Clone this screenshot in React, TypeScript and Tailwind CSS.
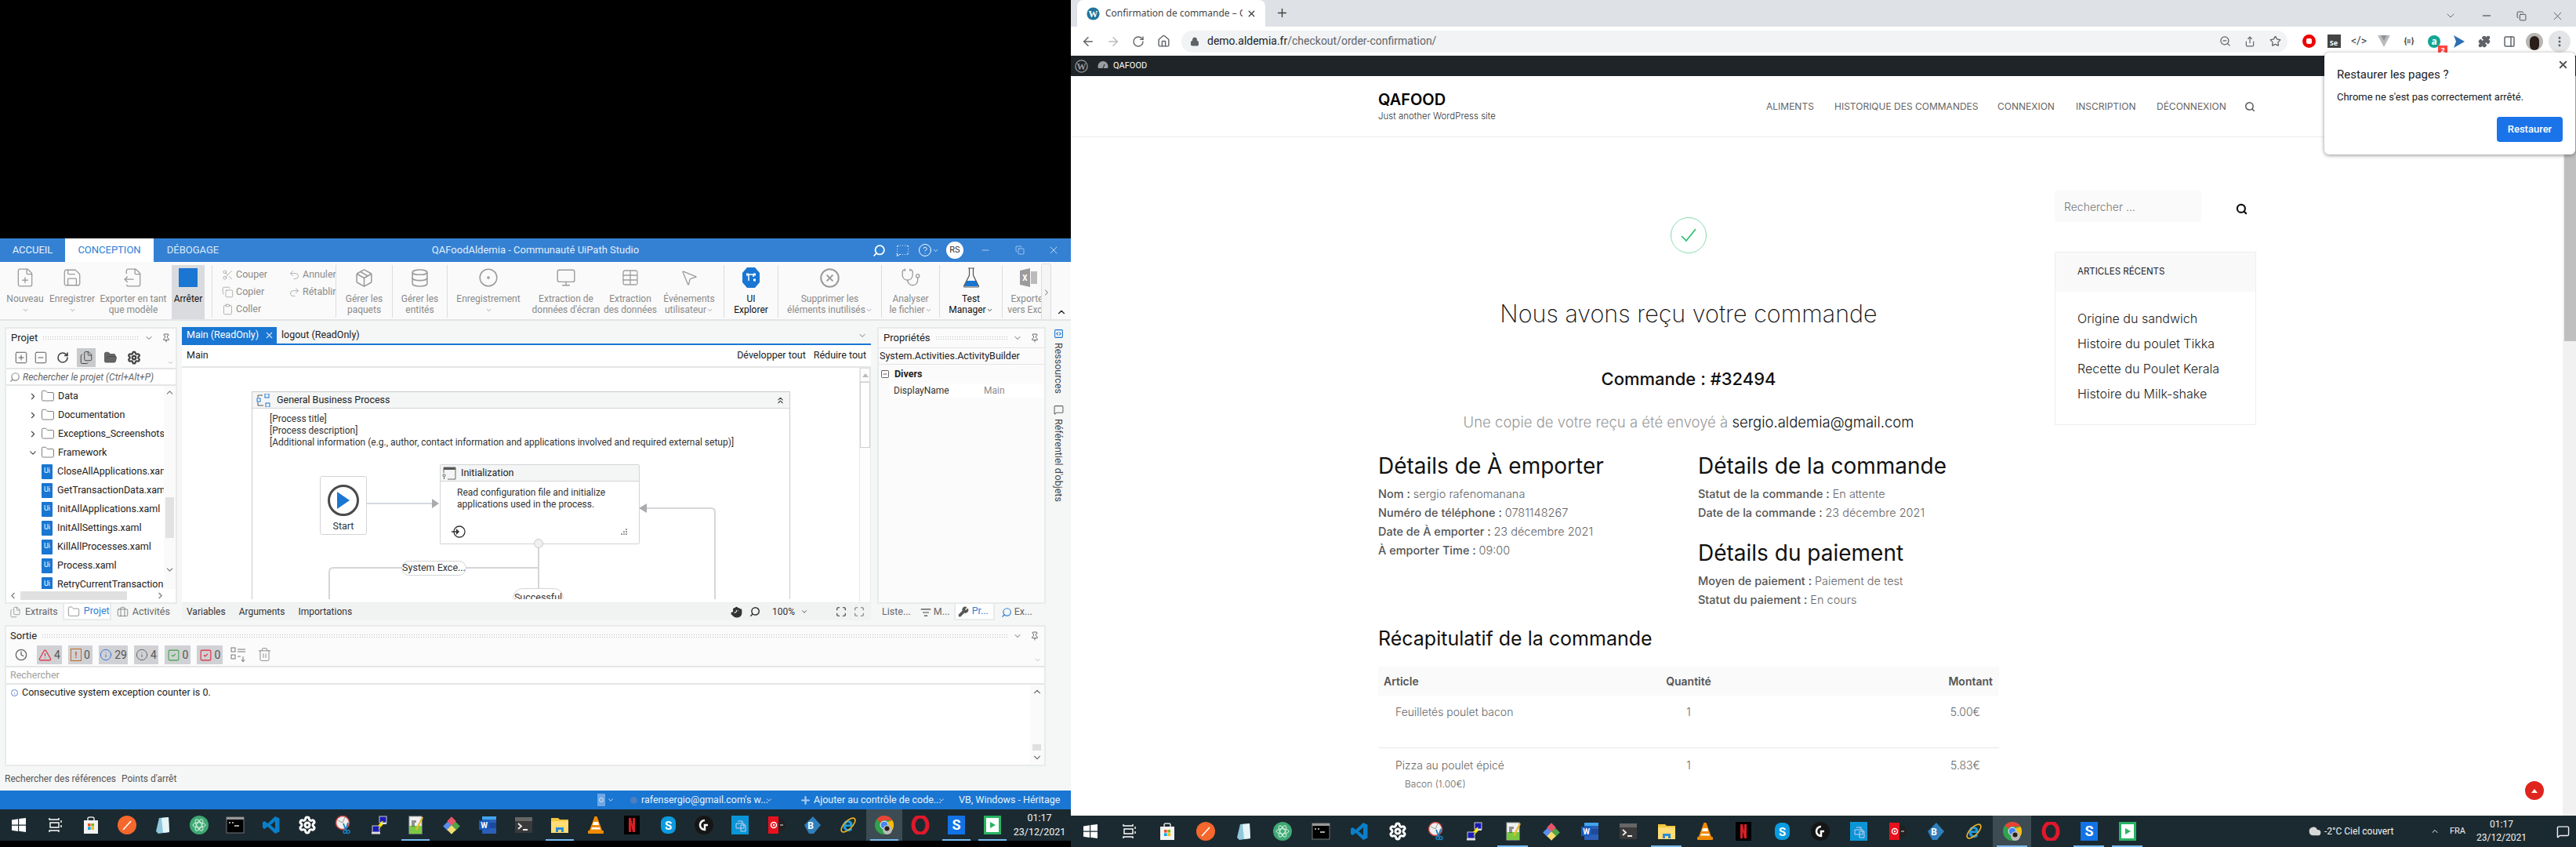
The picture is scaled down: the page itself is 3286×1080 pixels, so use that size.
import React from "react";
import {
  ArrowLeft, ArrowRight, ChevronDown, ChevronLeft, ChevronRight, ChevronUp, ChevronsUp, CircleDot, CircleHelp, CircleX, Clipboard,
  Clock, Cloud, Copy, Database, EllipsisVertical, FileOutput, FilePlus, Files, Folder, FolderOpen, Hand, Home, Lock, Maximize,
  MessageSquareDashed, Minus, Monitor, MousePointer2, Package, PanelRight, Pin, Plus, Puzzle, Redo2, RotateCw, Save, Scissors, Search,
  Settings, Share, SquareCheck, SquareMinus, SquarePlus, Star, Stethoscope, Table, Trash2, Undo2, X, ZoomOut, Wrench, Briefcase, TriangleAlert,
  Info, ListFilter, SquareCode, MessageSquare,
} from "lucide-react";

const ui = "font-['Roboto',sans-serif]";
const web = "font-['Inter',sans-serif]";

// ---- taskbar glyphs ----
const TaskIcon = ({ name, size }: { name: string; size: number }) => {
  const p = { width: size, height: size, viewBox: "0 0 24 24" };
  switch (name) {
    case "win":
      return <svg {...p}><path fill="#fff" d="M3 5.500l8-1.200V11.500H3zM12.200 4.100L21 3v8.500h-8.800zM3 12.700h8v7.200l-8-1.200zM12.200 12.700H21V21l-8.800-1.200z" /></svg>;
    case "tasks":
      return <svg {...p}><path fill="none" stroke="#fff" strokeWidth="1.400" d="M5 3v2h12V3M6 9h11v6H6zM5 21v-2h12v2M20 6v3M20 12v3" /></svg>;
    case "store":
      return <svg {...p}><path fill="none" stroke="#ddd" strokeWidth="1.500" d="M8 8V4q0-2 2-2h4q2 0 2 2v4" /><rect x="3" y="6" width="18" height="17" fill="#f3f3f3" /><rect x="8" y="10" width="3.600" height="3.600" fill="#f25022" /><rect x="12.400" y="10" width="3.600" height="3.600" fill="#7fba00" /><rect x="8" y="14.400" width="3.600" height="3.600" fill="#00a4ef" /><rect x="12.400" y="14.400" width="3.600" height="3.600" fill="#ffb900" /></svg>;
    case "postman":
      return <svg {...p}><circle cx="12" cy="12" r="12" fill="#f4672d" /><path stroke="#fff" strokeWidth="1.600" d="M7 18L17 7" /></svg>;
    case "notepad":
      return <svg {...p}><path fill="#8fc8dc" d="M7 3l12-1 1 19-14 2-3-3z" /><path fill="#e6f3f7" d="M10 3l9-1 1 19-8 1z" /></svg>;
    case "atom":
      return <svg {...p}><circle cx="12" cy="12" r="12" fill="#3fa874" /><g fill="none" stroke="#d8f5e4" strokeWidth="1"><ellipse cx="12" cy="12" rx="8" ry="3.200" /><ellipse cx="12" cy="12" rx="8" ry="3.200" transform="rotate(60 12 12)" /><ellipse cx="12" cy="12" rx="8" ry="3.200" transform="rotate(120 12 12)" /></g></svg>;
    case "cmd":
      return <svg {...p}><rect x="1" y="2" width="22" height="20" fill="#000" stroke="#777" /><rect x="1" y="2" width="22" height="3" fill="#999" /><path stroke="#ddd" strokeWidth="1.400" d="M4 9h2M8 9h2M11 13h6" /></svg>;
    case "vscode":
      return <svg {...p}><path fill="#0a7fc9" fillRule="evenodd" d="M17 1L7.500 10 3.500 7 1 8.500v7L3.500 17l4-3 9.500 9 5.500-2.500V3.500zM17 7v10l-6-5z" /></svg>;
    case "gear":
      return <Settings size={size} color="#fff" strokeWidth={3} />;
    case "snip":
      return <svg {...p}><circle cx="11" cy="9" r="8.500" fill="#eee" stroke="#c44" strokeWidth="1.500" /><path stroke="#999" d="M11 9l3-7M11 9l-6-3" /><path fill="none" stroke="#1a7fc0" strokeWidth="1.800" d="M12 10l3 8M18 9l-3 9" /><circle cx="14" cy="20.500" r="2" fill="none" stroke="#1a7fc0" strokeWidth="1.500" /><circle cx="18" cy="20.500" r="2" fill="none" stroke="#1a7fc0" strokeWidth="1.500" /></svg>;
    case "putty":
      return <svg {...p}><rect x="12" y="1" width="9" height="8" fill="#1a1ab8" stroke="#ccc" /><rect x="3" y="13" width="9" height="8" fill="#1a1ab8" stroke="#ccc" /><rect x="2" y="21" width="11" height="2.500" fill="#ddd" /><rect x="13" y="9" width="8" height="2" fill="#ddd" /><path fill="#ffe600" d="M15 7l-5 6 3 0-3 5 7-7-3 0 3-4z" /></svg>;
    case "npp":
      return <svg {...p}><rect x="4" y="1" width="16" height="22" fill="#f0f0f0" stroke="#aaa" /><rect x="4" y="13" width="16" height="10" fill="#7ac943" /><path stroke="#333" strokeWidth="1" d="M8 6v8M10 6v8M12 6v3" /><path stroke="#e8b92c" strokeWidth="2.200" d="M13 18L21 2" /></svg>;
    case "kraken":
      return <svg {...p}><rect x="3" y="9" width="9" height="9" transform="rotate(45 7.500 13.500)" fill="#5b8def" /><rect x="12" y="9" width="9" height="9" transform="rotate(45 16.500 13.500)" fill="#52a447" /><rect x="8" y="3" width="8" height="8" transform="rotate(45 12 7)" fill="#e8556a" /><rect x="8" y="14" width="8" height="8" transform="rotate(45 12 18)" fill="#f5dc6e" /></svg>;
    case "word":
      return <svg {...p}><rect x="5" y="1" width="18" height="22" fill="#2b5fb8" /><rect x="5" y="9" width="18" height="7" fill="#1d4a9c" /><rect x="5" y="1" width="18" height="4" fill="#41a5ee" /><rect x="1" y="6" width="13" height="12" fill="#185abd" /><text x="7.500" y="15.500" fontSize="10" fontWeight="700" fill="#fff" textAnchor="middle" fontFamily="Roboto">W</text></svg>;
    case "term":
      return <svg {...p}><rect x="1" y="2" width="22" height="20" rx="1" fill="#3a3a3a" /><rect x="1" y="2" width="22" height="5" fill="#666" /><path fill="none" stroke="#eee" strokeWidth="1.800" d="M5 10l4 3.500-4 3.500M11 18h6" /></svg>;
    case "files":
      return <svg {...p}><path fill="#f5c53d" d="M1 3h9l2 2h11v17H1z" /><rect x="1" y="7" width="22" height="15" fill="#ffdc74" /><path fill="#2a8bd8" d="M7 21v-6h10v6h-3v-3h-4v3z" /></svg>;
    case "vlc":
      return <svg {...p}><path fill="#f08a00" d="M10.500 1h3l7 19H3.500z" /><path fill="#fff" d="M9 8h6l1 4H8zM7 15h10l1 2.500H6z" /><rect x="2" y="19" width="20" height="4" rx="1" fill="#f08a00" /></svg>;
    case "netflix":
      return <svg {...p}><rect x="2" y="0" width="20" height="24" fill="#000" /><path fill="#d81f26" d="M8 3h3l2 9V3h3v18h-3l-2-9v9H8z" /></svg>;
    case "skype":
      return <svg {...p}><rect x="3" y="1" width="19" height="22" rx="8" fill="#0a9be0" /><text x="12.500" y="17.500" fontSize="15" fontWeight="700" fill="#fff" textAnchor="middle" fontFamily="Roboto">S</text></svg>;
    case "logi":
      return <svg {...p}><circle cx="12" cy="12" r="12" fill="#161616" /><path fill="none" stroke="#fff" strokeWidth="2.500" d="M13 6a6 6 0 1 0 0 12v-6h4" /></svg>;
    case "hp":
      return <svg {...p}><rect x="1" y="0" width="22" height="24" fill="#0a96d6" /><path fill="none" stroke="#cce" strokeWidth="1" d="M7 10h10v6H7zM9 7h6v3M13 12h6v8h-6z" /></svg>;
    case "rec":
      return <svg {...p}><circle cx="16" cy="12" r="8" fill="#222" /><rect x="2" y="1" width="13" height="22" fill="#e8101c" /><circle cx="9" cy="12" r="3.500" fill="none" stroke="#fff" strokeWidth="1.500" /><circle cx="9" cy="12" r="1.200" fill="#fff" /><path stroke="#aaa" strokeWidth="1.500" d="M17 12h4" /></svg>;
    case "blue":
      return <svg {...p}><path fill="#2f7fbd" d="M13 1l10 11-9 11H8L2 12z" /><text x="10" y="17" fontSize="12" fontWeight="700" fill="#fff" textAnchor="middle" fontFamily="Roboto">B</text></svg>;
    case "ie":
      return <svg {...p}><text x="11.500" y="20" fontSize="25" fontWeight="700" fill="#1e9be0" textAnchor="middle" fontFamily="Roboto">e</text><ellipse cx="12" cy="12" rx="11.500" ry="5" transform="rotate(-45 12 12)" fill="none" stroke="#f0b323" strokeWidth="1.600" /></svg>;
    case "chrome":
      return <svg {...p}><circle cx="12" cy="12" r="12" fill="#2fa24d" /><path fill="#ea4335" d="M12 0a12 12 0 0 1 10.400 6H12a6 6 0 0 0-5.400 3.400L2.800 4.300A12 12 0 0 1 12 0z" /><path fill="#fbbc04" d="M22.400 6A12 12 0 0 1 13 24l4-9a6 6 0 0 0-1-7z" /><circle cx="12" cy="12" r="5" fill="#4285f4" stroke="#fff" /><circle cx="16" cy="18" r="6" fill="#bbb" /><circle cx="15.500" cy="16.500" r="3" fill="#2a1e1a" /></svg>;
    case "opera":
      return <svg {...p}><ellipse cx="12" cy="12" rx="9" ry="11" fill="none" stroke="#e0182b" strokeWidth="5" /></svg>;
    case "snag":
      return <svg {...p}><rect x="1" y="0" width="22" height="24" fill="#1173e6" /><text x="12" y="18" fontSize="18" fontWeight="700" fill="#fff" textAnchor="middle" fontFamily="Roboto">S</text></svg>;
    default:
      return <svg {...p}><rect x="1" y="0" width="22" height="24" fill="#28b463" /><rect x="4" y="3" width="16" height="18" fill="#fff" /><path fill="#28b463" d="M9 8l7 4-7 4z" /></svg>;
  }
};

const taskNames = ["win", "tasks", "store", "postman", "notepad", "atom", "cmd", "vscode", "gear", "snip", "putty", "npp", "kraken", "word", "term", "files", "vlc", "netflix", "skype", "logi", "hp", "rec", "blue", "ie", "chrome", "opera", "snag", "play"];
const running = ["npp", "files", "chrome", "snag", "play"];

const Taskbar = ({ itemW, iconSize, height }: { itemW: string; iconSize: number; height: string }) => (
  <>
    {taskNames.map((n) => (
      <div key={n} className={`relative flex shrink-0 items-center justify-center ${itemW} ${height} ${n === "chrome" ? "bg-[#3d4b52]" : ""}`}>
        <TaskIcon name={n} size={iconSize} />
        {running.includes(n) && <div className="absolute bottom-0 left-[5px] right-[5px] h-[2px] bg-[#76b9ed]" />}
      </div>
    ))}
  </>
);

// ---- studio ribbon ----
const Sep = () => <div className="mt-[4px] h-[67px] w-px shrink-0 bg-[#dcdddf]" />;

const RibbonBtn = ({ w, icon, lines, dark, chevron, inline }: { w: string; icon: React.ReactNode; lines: string[]; dark?: boolean; chevron?: boolean; inline?: boolean }) => (
  <div className={`flex shrink-0 flex-col items-center pt-[8px] text-center leading-[14px] ${w} ${dark ? "text-[#111]" : "text-[#8a8a8a]"}`}>
    <div className="flex h-[24px] items-center justify-center">{icon}</div>
    <div className="mt-[8px] whitespace-nowrap">{lines[0]}</div>
    {lines[1] && (
      <div className="flex items-center whitespace-nowrap">
        {lines[1]}
        {inline && <ChevronDown size={9} />}
      </div>
    )}
    {chevron && <ChevronDown size={9} className="mt-[3px]" />}
  </div>
);

const SmallCmd = ({ icon, label }: { icon: React.ReactNode; label: string }) => (
  <div className="flex h-[22px] items-center gap-[3px] text-[#8a8a8a]">
    <span className="flex w-[16px] justify-center">{icon}</span>
    {label}
  </div>
);

const ic = "#9b9b9b";

const Ribbon = () => (
  <div className={`flex h-[75px] shrink-0 overflow-hidden border-b-2 border-[#e4e5e6] bg-[#fafafa] pl-[2px] text-[12px] ${ui}`}>
    <RibbonBtn w="w-[60px]" icon={<FilePlus size={26} color={ic} strokeWidth={1.2} />} lines={["Nouveau", ""]} chevron />
    <RibbonBtn w="w-[60px]" icon={<Save size={26} color={ic} strokeWidth={1.2} />} lines={["Enregistrer", ""]} chevron />
    <RibbonBtn w="w-[96px]" icon={<FileOutput size={26} color={ic} strokeWidth={1.2} />} lines={["Exporter en tant", "que modèle"]} />
    <div className="ml-px mt-[4px] flex h-[71px] w-[42px] shrink-0 flex-col items-center bg-[#dadbde] pt-[4px] text-[#111]">
      <div className="h-[24px] w-[24px] bg-[#1976d2]" />
      <div className="mt-[8px] leading-[14px]">Arrêter</div>
    </div>
    <div className="w-[9px] shrink-0" />
    <Sep />
    <div className="grid w-[157px] shrink-0 grid-cols-[85px_1fr] content-start pl-[11px] pt-[5px] text-[12.500px]">
      <SmallCmd icon={<Scissors size={15} color={ic} strokeWidth={1.2} />} label="Couper" />
      <SmallCmd icon={<Undo2 size={15} color={ic} strokeWidth={1.2} />} label="Annuler" />
      <SmallCmd icon={<Copy size={15} color={ic} strokeWidth={1.2} />} label="Copier" />
      <SmallCmd icon={<Redo2 size={15} color={ic} strokeWidth={1.2} />} label="Rétablir" />
      <SmallCmd icon={<Clipboard size={15} color={ic} strokeWidth={1.2} />} label="Coller" />
    </div>
    <Sep />
    <RibbonBtn w="w-[71px]" icon={<Package size={25} color={ic} strokeWidth={1.5} />} lines={["Gérer les", "paquets"]} />
    <Sep />
    <RibbonBtn w="w-[69px]" icon={<Database size={25} color={ic} strokeWidth={1.5} />} lines={["Gérer les", "entités"]} />
    <Sep />
    <RibbonBtn w="w-[104px]" icon={<CircleDot size={26} color={ic} strokeWidth={1.4} />} lines={["Enregistrement", ""]} chevron />
    <RibbonBtn w="w-[94px]" icon={<Monitor size={26} color={ic} strokeWidth={1.3} />} lines={["Extraction de", "données d'écran"]} />
    <RibbonBtn w="w-[70px]" icon={<Table size={24} color={ic} strokeWidth={1.3} strokeDasharray="2 1" />} lines={["Extraction", "des données"]} />
    <RibbonBtn w="w-[80px]" icon={<MousePointer2 size={24} color={ic} strokeWidth={1.3} />} lines={["Événements", "utilisateur"]} inline />
    <div className="w-[4px] shrink-0" />
    <Sep />
    <RibbonBtn
      w="w-[68px]"
      dark
      icon={
        <svg width="22" height="26" viewBox="0 0 22 26">
          <path fill="#1976d2" d="M6 0h10l6 7v12l-6 7H6l-6-7V7z" />
          <path fill="none" stroke="#fff" strokeWidth="1.500" d="M7 9h8M8 9v8M14 9v3" />
          <rect x="5" y="7.500" width="3" height="3" fill="#fff" />
          <rect x="14" y="7.500" width="3" height="3" fill="#fff" />
          <rect x="14" y="14.500" width="3" height="3" fill="#fff" />
        </svg>
      }
      lines={["UI", "Explorer"]}
    />
    <Sep />
    <RibbonBtn w="w-[131px]" icon={<CircleX size={27} color={ic} strokeWidth={1.8} />} lines={["Supprimer les", "éléments inutilisés"]} inline />
    <Sep />
    <RibbonBtn w="w-[73px]" icon={<Stethoscope size={26} color={ic} strokeWidth={1.2} />} lines={["Analyser", "le fichier"]} inline />
    <Sep />
    <RibbonBtn
      w="w-[79px]"
      dark
      icon={
        <svg width="24" height="26" viewBox="0 0 24 26">
          <path fill="#1976d2" d="M6 17h12l3 7H3z" />
          <path fill="none" stroke="#555" strokeWidth="1.200" d="M8 1h8M9.500 1v9L2.500 24q0 1 1 1h17q1 0 1-1L14.500 10V1" />
        </svg>
      }
      lines={["Test", "Manager"]}
      inline
    />
    <Sep />
    <div className="w-[49px] shrink-0 overflow-hidden">
      <div className="flex w-[66px] flex-col items-center pt-[8px] leading-[14px] text-[#8a8a8a]">
        <svg width="22" height="24" viewBox="0 0 22 24"><path fill="#9b9b9b" d="M0 3l13-3v24L0 21z" /><rect x="14" y="4" width="8" height="16" fill="#bbb" /><text x="6.500" y="16" fontSize="10" fontWeight="700" fill="#fff" textAnchor="middle">X</text></svg>
        <div className="mt-[8px] whitespace-nowrap">Exporter</div>
        <div className="whitespace-nowrap">vers Excel</div>
      </div>
    </div>
    <div className="relative mt-[2px] h-[73px] w-[13px] shrink-0 rounded-t-[2px] border border-[#dcdddf] bg-[#f5f5f5]">
      <ChevronRight size={12} color="#666" className="absolute left-0 top-[30px]" />
    </div>
    <div className="flex flex-1 items-end justify-center pb-[2px]"><ChevronUp size={14} color="#222" /></div>
  </div>
);

const Grip = () => <div className="h-[7px] flex-1 bg-[radial-gradient(#bdbdbd_0.7px,transparent_0.8px)] bg-[length:3px_3px]" />;

const PanelHead = ({ title }: { title: string }) => (
  <div className="flex h-[24px] shrink-0 items-center gap-[6px] px-[6px]">
    <span className="text-[13px] text-[#222]">{title}</span>
    <Grip />
    <ChevronDown size={12} color="#666" />
    <Pin size={12} color="#666" className="ml-[4px]" />
  </div>
);

const treeFolders = [
  { name: "Data", open: false },
  { name: "Documentation", open: false },
  { name: "Exceptions_Screenshots", open: false },
  { name: "Framework", open: true },
];
const treeFiles = ["CloseAllApplications.xaml", "GetTransactionData.xaml", "InitAllApplications.xaml", "InitAllSettings.xaml", "KillAllProcesses.xaml", "Process.xaml", "RetryCurrentTransaction.xaml"];

const ProjectPanel = () => (
  <div className="flex w-[220px] shrink-0 flex-col">
    <div className="flex h-[353px] flex-col border-2 border-[#e9eaeb] bg-[#fbfbfb]">
      <PanelHead title="Projet" />
      <div className="relative flex h-[28px] shrink-0 items-center gap-[7px] border-b-2 border-[#e4e5e6] pl-[10px]">
        <SquarePlus size={18} color="#555" strokeWidth={1.3} />
        <SquareMinus size={18} color="#555" strokeWidth={1.3} />
        <RotateCw size={16} color="#444" strokeWidth={2.4} className="ml-[4px]" />
        <div className="ml-[3px] flex h-[24px] w-[24px] items-center justify-center bg-[#c9cacc]"><Files size={18} color="#444" strokeWidth={1.3} /></div>
        <FolderOpen size={18} color="#444" fill="#666" strokeWidth={1} className="ml-[3px]" />
        <Settings size={18} color="#444" strokeWidth={3} className="ml-[5px]" />
        <ChevronDown size={9} color="#aaa" className="absolute bottom-[2px] right-[2px]" />
      </div>
      <div className="flex h-[21px] shrink-0 items-center gap-[3px] border-b-2 border-[#e4e5e6] bg-white pl-[4px] text-[12px] italic text-[#666]">
        <Search size={14} color="#888" className="-scale-x-100" />
        Rechercher le projet (Ctrl+Alt+P)
      </div>
      <div className="flex min-h-0 flex-1">
        <div className="w-[201px] overflow-hidden bg-white pl-[26px] pt-[1px] text-[12.500px] text-[#222]">
          {treeFolders.map((f) => (
            <div key={f.name} className="flex h-[24px] items-center whitespace-nowrap">
              {f.open ? <ChevronDown size={13} color="#444" className="w-[16px] shrink-0" /> : <ChevronRight size={13} color="#444" className="w-[16px] shrink-0" />}
              <Folder size={18} color="#555" strokeWidth={1} className="ml-[2px] mr-[4px] shrink-0" />
              {f.name}
            </div>
          ))}
          {treeFiles.map((f) => (
            <div key={f} className="flex h-[24px] items-center whitespace-nowrap pl-[19px]">
              <div className="mr-[6px] flex h-[19px] w-[14px] shrink-0 items-center justify-center rounded-[1px] bg-[#1976d2] text-[9px] text-white">Ui</div>
              {f}
            </div>
          ))}
        </div>
        <div className="relative w-[15px] bg-[#fafafa]">
          <ChevronUp size={13} color="#777" className="absolute left-px top-[2px]" />
          <div className="absolute left-[2px] top-[142px] h-[52px] w-[11px] bg-[#e2e2e3]" />
          <ChevronDown size={13} color="#777" className="absolute bottom-[18px] left-px" />
        </div>
      </div>
      <div className="flex h-[17px] shrink-0 items-center bg-white">
        <ChevronLeft size={13} color="#777" className="ml-[2px] shrink-0" />
        <div className="ml-[3px] h-[11px] w-[136px] bg-[#e0e0e1]" />
        <ChevronRight size={13} color="#777" className="ml-[36px] shrink-0" />
      </div>
    </div>
    <div className="flex h-[21px] items-center text-[12.500px] text-[#666]">
      <Files size={15} color="#888" strokeWidth={1.2} className="ml-[6px] mr-[5px]" />
      Extraits
      <div className="ml-[6px] flex h-full w-[62px] items-center gap-[5px] border-x-2 border-b-2 border-[#e9eaeb] bg-white pl-[4px] text-[#2b80d8]">
        <Folder size={16} color="#666" strokeWidth={1} />
        Projet
      </div>
      <Briefcase size={15} color="#666" strokeWidth={1.2} className="ml-[7px] mr-[5px]" />
      Activités
    </div>
  </div>
);

// ---- main workflow canvas, nodes sit on a free canvas ----
const Diagram = () => (
  <div className="relative h-[295px] min-w-0 flex-1 overflow-hidden bg-white text-[12px] text-[#333]">
    <div className="absolute left-[89px] top-[30px] h-[400px] w-[687px] border border-[#c9cacd]">
      <div className="flex h-[21px] items-center border-b border-[#d3d4d6] bg-[#f4f5f5] pl-[5px] text-[12.500px] text-[#222]">
        <svg width="18" height="17" viewBox="0 0 18 17" className="mr-[8px]">
          <rect x="11" y="0" width="5" height="5" fill="none" stroke="#1976d2" />
          <rect x="1" y="6" width="4" height="4" fill="#fff" stroke="#1976d2" />
          <rect x="12" y="12" width="5" height="5" fill="none" stroke="#1976d2" />
          <path fill="none" stroke="#555" d="M2 5V2h6M2 11v4h7" />
        </svg>
        General Business Process
        <ChevronsUp size={13} color="#444" className="ml-auto mr-[5px]" />
      </div>
      <div className="pl-[22px] pt-[6px] leading-[15px]">
        <div>[Process title]</div>
        <div>[Process description]</div>
        <div>[Additional information (e.g., author, contact information and applications involved and required external setup)]</div>
      </div>
    </div>

    <svg className="absolute inset-0" width="864" height="295" fill="none">
      <path d="M236 173H320" stroke="#d5d9e2" strokeWidth="2" />
      <path d="M319 167l9 6-9 6z" fill="#a9abaf" />
      <path d="M593 179H675Q680 179 680 184V295" stroke="#d5d6d9" strokeWidth="2" />
      <path d="M593 173l-10 6 10 6z" fill="#a9abaf" />
      <path d="M455 230V290M455 255H193Q188 255 188 260V295" stroke="#d5d6d9" strokeWidth="2" />
    </svg>

    <div className="absolute left-[176px] top-[138px] flex h-[75px] w-[60px] flex-col items-center rounded-[3px] border border-[#d3d4d6] bg-white pt-[10px]">
      <div className="flex h-[40px] w-[40px] items-center justify-center rounded-full border-[3px] border-[#4a4a4a]">
        <svg width="18" height="22" viewBox="0 0 18 22"><path fill="#1976d2" d="M1 0l16 11L1 22z" /></svg>
      </div>
      <div className="mt-[4px] text-[12.500px]">Start</div>
    </div>

    <div className="absolute left-[329px] top-[123px] h-[102px] w-[255px] rounded-[2px] border border-[#d3d4d6] bg-white">
      <div className="flex h-[21px] items-center border-b border-[#d3d4d6] bg-[#f4f5f5] pl-[2px] text-[12.500px] text-[#222]">
        <svg width="18" height="17" viewBox="0 0 18 17" className="mr-[6px]">
          <rect x="2" y="1" width="15" height="3" fill="#555" />
          <path fill="none" stroke="#666" d="M2 1h15v15H7M2 1v7" />
          <circle cx="2.500" cy="11" r="1.500" fill="none" stroke="#666" />
          <path stroke="#666" d="M2.500 12.500V16" />
        </svg>
        Initialization
      </div>
      <div className="pl-[21px] pt-[7px] leading-[15px]">
        <div>Read configuration file and initialize</div>
        <div>applications used in the process.</div>
      </div>
      <svg className="absolute bottom-[6px] left-[14px]" width="20" height="18" viewBox="0 0 20 18" fill="none">
        <circle cx="10" cy="9" r="7" stroke="#333" strokeWidth="1.300" />
        <path d="M0 9h7" stroke="#333" strokeWidth="1.500" />
        <path fill="#333" d="M6 5l4 4-4 4z" />
      </svg>
      <svg className="absolute bottom-[8px] right-[14px]" width="11" height="11" viewBox="0 0 11 11" fill="#9a9a9a">
        <rect x="8" y="0" width="2" height="2" /><rect x="5" y="3" width="2" height="2" /><rect x="8" y="3" width="2" height="2" /><rect x="2" y="6" width="2" height="2" /><rect x="5" y="6" width="2" height="2" /><rect x="8" y="6" width="2" height="2" />
      </svg>
    </div>
    <div className="absolute left-[449px] top-[218px] h-[12px] w-[12px] rounded-full border border-[#c9cacd] bg-[#f0f0f0]" />

    <div className="absolute left-[280px] top-[246px] flex h-[19px] w-[83px] items-center justify-center rounded-full border border-[#d3d4d6] bg-white text-[12.500px]">System Exce...</div>
    <div className="absolute left-[422px] top-[281px] flex h-[25px] w-[65px] items-start justify-center rounded-full border border-[#d3d4d6] bg-white pt-[2px] text-[12.500px]">Successful</div>
  </div>
);

const CenterPanel = () => (
  <div className="flex w-[879px] shrink-0 flex-col">
    <div className="flex h-[21px] shrink-0 items-center whitespace-nowrap text-[12.500px] text-[#222]">
      <div className="flex h-full w-[121px] items-center gap-[7px] bg-[#1976d2] pl-[6px] text-white">
        Main (ReadOnly)
        <X size={13} color="#cfe3f7" />
      </div>
      <span className="ml-[6px]">logout (ReadOnly)</span>
      <ChevronDown size={12} color="#777" className="ml-auto mr-[5px]" />
    </div>
    <div className="h-[2px] shrink-0 bg-[#1976d2]" />
    <div className="flex h-[29px] shrink-0 items-center justify-between border-b-2 border-[#e4e5e6] bg-white px-[6px] text-[12.500px] text-[#222]">
      <span>Main</span>
      <div className="flex gap-[10px]"><span>Développer tout</span><span>Réduire tout</span></div>
    </div>
    <div className="flex h-[299px] shrink-0 bg-white">
      <Diagram />
      <div className="relative h-full w-[15px] shrink-0 border-x border-[#eaeaea] bg-[#fdfdfd]">
        <div className="flex h-[18px] items-center justify-center border border-[#ddd]"><div className="border-x-[4px] border-b-[5px] border-x-transparent border-b-[#bbb]" /></div>
        <div className="h-[84px] border border-[#cfcfcf] bg-white" />
      </div>
    </div>
    <div className="flex h-[23px] shrink-0 items-center border-t border-[#ececed] bg-[#f1f2f2] text-[12px] text-[#333]">
      <span className="ml-[6px]">Variables</span>
      <span className="ml-[17px]">Arguments</span>
      <span className="ml-[17px]">Importations</span>
      <div className="ml-auto flex items-center pr-[8px]">
        <Hand size={15} color="#333" fill="#333" />
        <Search size={14} color="#333" strokeWidth={2.5} className="ml-[9px] -scale-x-100" />
        <span className="ml-[15px] w-[36px]">100%</span>
        <ChevronDown size={10} color="#333" />
        <Maximize size={14} color="#333" className="ml-[35px]" />
        <Maximize size={14} color="#777" className="ml-[9px]" />
      </div>
    </div>
  </div>
);

const PropsPanel = () => (
  <div className="flex w-[215px] shrink-0 flex-col">
    <div className="flex h-[353px] flex-col border-2 border-[#e9eaeb] bg-[#fbfbfb]">
      <PanelHead title="Propriétés" />
      <div className="flex h-[22px] shrink-0 items-center border-y border-[#e4e5e6] px-[1px] text-[12.500px] text-[#222]">System.Activities.ActivityBuilder</div>
      <div className="flex h-[24px] items-center gap-[6px] pl-[2px] text-[12.500px] font-bold text-[#222]">
        <SquareMinus size={12} color="#333" strokeWidth={1.5} />
        Divers
      </div>
      <div className="ml-[14px] flex h-[18px] items-center bg-white pl-[5px] text-[12px] text-[#333]">
        <span className="w-[115px]">DisplayName</span>
        <span className="text-[#8b8b8b]">Main</span>
      </div>
    </div>
    <div className="flex h-[21px] items-center text-[12.500px] text-[#666]">
      <span className="ml-[6px]">Liste...</span>
      <ListFilter size={14} color="#444" className="ml-[12px]" />
      <span className="ml-[3px]">M...</span>
      <div className="ml-[5px] flex h-full w-[52px] items-center gap-[4px] border-x-2 border-b-2 border-[#e9eaeb] bg-white pl-[3px] text-[#2b80d8]">
        <Wrench size={14} color="#555" fill="#555" />
        Pr...
      </div>
      <Search size={14} color="#2b80d8" className="ml-[8px] mr-[3px] -scale-x-100" />
      Ex...
    </div>
  </div>
);

const VerticalStrip = () => (
  <div className="flex w-[32px] shrink-0 flex-col items-center pt-[2px] text-[12.500px] text-[#444]">
    <SquareCode size={13} color="#1976d2" />
    <div className="mt-[5px] [writing-mode:vertical-rl]">Ressources</div>
    <MessageSquare size={13} color="#666" className="mt-[14px]" />
    <div className="mt-[5px] [writing-mode:vertical-rl]">Référentiel d'objets</div>
  </div>
);

const Toggle = ({ w, icon, n }: { w: string; icon: React.ReactNode; n: string }) => (
  <div className={`flex h-[24px] shrink-0 items-center justify-center gap-[3px] bg-[#d0d1d4] text-[14px] text-[#555] ${w}`}>{icon}{n}</div>
);

const OutputPanel = () => (
  <div className="ml-[6px] flex h-[180px] w-[1328px] shrink-0 flex-col border-2 border-[#e9eaeb] bg-[#fbfbfb]">
    <div className="flex h-[24px] shrink-0 items-center gap-[6px] pl-[5px] pr-[6px]">
      <span className="text-[13px] text-[#222]">Sortie</span>
      <Grip />
      <ChevronDown size={12} color="#666" />
      <Pin size={12} color="#666" className="ml-[4px]" />
    </div>
    <div className="flex h-[26px] shrink-0 items-start">
      <Clock size={16} color="#666" className="ml-[11px] mr-[12px] mt-[4px]" />
      <div className="flex items-center gap-[8px]">
        <Toggle w="w-[32px]" icon={<TriangleAlert size={17} color="#e0233a" strokeWidth={1.5} />} n="4" />
        <Toggle w="w-[31px]" icon={<div className="flex h-[16px] w-[14px] items-center justify-center border-[1.500px] border-[#c06a28] text-[11px] font-bold leading-none text-[#c06a28]">!</div>} n="0" />
        <Toggle w="w-[37px]" icon={<Info size={16} color="#3b78d8" strokeWidth={1.5} />} n="29" />
        <Toggle w="w-[31px]" icon={<Info size={16} color="#666" strokeWidth={1.5} />} n="4" />
        <Toggle w="w-[33px]" icon={<SquareCheck size={17} color="#3aa345" strokeWidth={1.5} />} n="0" />
        <Toggle w="w-[33px]" icon={<SquareCheck size={17} color="#e0233a" strokeWidth={1.5} />} n="0" />
      </div>
      <svg width="20" height="22" viewBox="0 0 20 22" fill="none" stroke="#777" className="ml-[10px] mt-[1px]">
        <rect x="1" y="2" width="5" height="5" /><rect x="1" y="11" width="5" height="5" /><path d="M9 4h10M9 7h10M9 13h4M16 13v6M14 17l2 3 2-3" />
      </svg>
      <Trash2 size={19} color="#888" strokeWidth={1.2} className="ml-[14px] mt-[2px]" />
      <ChevronDown size={9} color="#aaa" className="ml-auto mt-[14px] mr-[4px]" />
    </div>
    <div className="flex h-[24px] shrink-0 items-center border-y-2 border-[#e4e5e6] bg-white pl-[5px] text-[12.500px] text-[#a0a0a0]">Rechercher</div>
    <div className="flex min-h-0 flex-1 bg-white">
      <div className="flex min-w-0 flex-1 items-start gap-[5px] pl-[6px] pt-[2px] text-[12.500px] leading-[16px] text-[#222]">
        <div className="mt-[4px] flex h-[9px] w-[9px] items-center justify-center rounded-full border border-[#5b86d8] text-[6px] text-[#5b86d8]">i</div>
        Consecutive system exception counter is 0.
      </div>
      <div className="relative w-[18px] bg-[#fafafa]">
        <ChevronUp size={14} color="#777" className="absolute left-[2px] top-[2px]" />
        <div className="absolute bottom-[18px] left-[3px] h-[8px] w-[11px] bg-[#dfdfdf]" />
        <ChevronDown size={14} color="#777" className="absolute bottom-[2px] left-[2px]" />
      </div>
    </div>
  </div>
);

const StudioWindow = () => (
  <div className={`flex h-[728px] shrink-0 flex-col bg-[#f5f6f6] ${ui}`}>
    <div className="flex h-[30px] shrink-0 bg-[#3481d3] text-white">
      <div className="flex w-[330px] text-[13px]">
        <span className="flex w-[83px] items-center justify-center text-[#eaf3fb]">ACCUEIL</span>
        <span className="flex w-[113px] items-center justify-center bg-white text-[#2b80d8]">CONCEPTION</span>
        <span className="flex w-[100px] items-center justify-center text-[#dcebf8]">DÉBOGAGE</span>
      </div>
      <div className="flex flex-1 items-center justify-center text-[13px] text-[#e3eef9]">QAFoodAldemia - Communauté UiPath Studio</div>
      <div className="flex w-[330px] items-center pl-[70px]">
        <div className="flex w-[30px] justify-center"><Search size={17} strokeWidth={2.5} className="-scale-x-100" /></div>
        <div className="flex w-[30px] justify-center"><MessageSquareDashed size={17} strokeWidth={1.4} /></div>
        <div className="flex w-[37px] items-center justify-center"><CircleHelp size={18} strokeWidth={1.3} /><ChevronDown size={9} /></div>
        <div className="flex w-[30px] justify-center"><div className="flex h-[22px] w-[22px] items-center justify-center rounded-full bg-white text-[11px] text-[#333]">RS</div></div>
        <div className="flex w-[47px] justify-center"><Minus size={14} strokeWidth={1} /></div>
        <div className="flex w-[42px] justify-center"><Copy size={12} strokeWidth={1} /></div>
        <div className="flex w-[44px] justify-center"><X size={16} strokeWidth={1} /></div>
      </div>
    </div>
    <Ribbon />
    <div className="flex min-h-0 flex-1 flex-col pt-[8px]">
      <div className="flex h-[374px] shrink-0 pl-[6px]">
        <ProjectPanel />
        <div className="w-[6px] shrink-0" />
        <CenterPanel />
        <div className="w-[8px] shrink-0" />
        <PropsPanel />
        <VerticalStrip />
      </div>
      <div className="h-[6px] shrink-0" />
      <OutputPanel />
      <div className="flex h-[31px] shrink-0 items-center pl-[6px] text-[12px] text-[#555]">
        <span className="w-[149px]">Rechercher des références</span>
        <span>Points d'arrêt</span>
      </div>
    </div>
    <div className="flex h-[24px] shrink-0 items-center whitespace-nowrap bg-[#1976d2] text-[12.500px] text-[#eaf3fb]">
      <div className="ml-[762px] flex h-[16px] w-[10px] items-center justify-center bg-[#6fa8e6]"><div className="h-[6px] w-[6px] rounded-full border border-[#d0e2f6]" /></div>
      <ChevronDown size={10} className="ml-[2px]" />
      <div className="ml-[20px] h-[9px] w-[9px] rounded-full bg-[#4a7fc0]" />
      <span className="ml-[5px] w-[156px]">rafensergio@gmail.com's w...</span>
      <ChevronDown size={10} className="ml-[2px]" />
      <Plus size={15} color="#a9cdf2" strokeWidth={3.5} className="ml-[34px]" />
      <span className="ml-[3px] w-[155px]">Ajouter au contrôle de code...</span>
      <ChevronDown size={10} className="ml-[3px]" />
      <span className="ml-[17px]">VB, Windows - Héritage</span>
    </div>
  </div>
);

const LeftScreen = () => (
  <div className="flex h-[1080px] w-[1366px] shrink-0 flex-col">
    <div className="h-[304px] shrink-0 bg-black" />
    <StudioWindow />
    <div className={`flex h-[40px] shrink-0 items-center bg-[#1b2a30] pl-px text-[12.500px] text-[#f2f2f2] ${ui}`}>
      <Taskbar itemW="w-[46px]" iconSize={24} height="h-[40px]" />
      <div className="ml-[7px] flex w-[60px] flex-col items-center leading-[18px]">
        <span>01:17</span>
        <span>23/12/2021</span>
      </div>
    </div>
    <div className="flex-1 bg-black" />
  </div>
);

// ---- chrome + shop page ----
const ToolbarSlot = ({ children }: { children: React.ReactNode }) => <div className="flex w-[32px] shrink-0 items-center justify-center">{children}</div>;

const ChromeBars = () => (
  <>
    <div className="flex h-[34px] shrink-0 items-end bg-[#dee1e6] pl-[8px]">
      <div className="flex h-[34px] w-[240px] items-center rounded-t-[8px] bg-white pl-[12px] text-[12px] text-[#45474a]">
        <svg width="17" height="17" viewBox="0 0 20 20"><circle cx="10" cy="10" r="9.500" fill="#21759b" /><text x="10" y="15" fontSize="14" fontWeight="700" fill="#fff" textAnchor="middle" fontFamily="Liberation Serif">W</text></svg>
        <span className="ml-[7px] w-[175px] overflow-hidden whitespace-nowrap">Confirmation de commande – QAFOOD</span>
        <X size={13} color="#444" strokeWidth={2.5} className="ml-[5px]" />
      </div>
      <Plus size={17} color="#444" strokeWidth={2} className="mb-[9px] ml-[13px]" />
      <div className="ml-auto flex h-[28px] items-center text-[#333]">
        <ChevronDown size={16} strokeWidth={1} className="mr-[30px]" />
        <Minus size={16} strokeWidth={1.5} className="mr-[30px]" />
        <Copy size={13} strokeWidth={1.5} className="mr-[31px]" />
        <X size={17} strokeWidth={1} className="mr-[15px]" />
      </div>
    </div>
    <div className="flex h-[37px] shrink-0 items-center bg-white pl-[6px] text-[#5f6368]">
      <ToolbarSlot><ArrowLeft size={18} strokeWidth={2} /></ToolbarSlot>
      <ToolbarSlot><ArrowRight size={18} strokeWidth={2} color="#b9bcbf" /></ToolbarSlot>
      <ToolbarSlot><RotateCw size={16} strokeWidth={2} /></ToolbarSlot>
      <ToolbarSlot><Home size={17} strokeWidth={2} /></ToolbarSlot>
      <div className="ml-[7px] flex h-[28px] w-[1411px] shrink-0 items-center rounded-full bg-[#f1f3f4] pl-[11px] font-['Roboto',sans-serif] text-[14px]">
        <Lock size={12} fill="#5f6368" />
        <span className="ml-[10px] text-[#202124]">demo.aldemia.fr<span className="text-[#5f6368]">/checkout/order-confirmation/</span></span>
        <div className="ml-auto flex">
          <ToolbarSlot><ZoomOut size={15} /></ToolbarSlot>
          <ToolbarSlot><Share size={14} /></ToolbarSlot>
          <ToolbarSlot><Star size={15} /></ToolbarSlot>
        </div>
      </div>
      <div className="ml-[11px] flex">
        <ToolbarSlot><div className="h-[17px] w-[17px] rounded-full border-[3px] border-[#e00] bg-[#e00] p-[2px]"><div className="h-full w-full rounded-[2px] bg-white" /></div></ToolbarSlot>
        <ToolbarSlot><div className="flex h-[17px] w-[17px] items-end justify-center bg-[#444] text-[9px] font-bold leading-[12px] text-white">Se</div></ToolbarSlot>
        <ToolbarSlot><span className="font-['Roboto',sans-serif] text-[14px] text-[#444]">&lt;/&gt;</span></ToolbarSlot>
        <ToolbarSlot><svg width="16" height="15" viewBox="0 0 16 15"><path fill="#b9bcbf" d="M0 0h16L8 15z" /><path fill="#8f9396" d="M4 0h8L8 7z" /></svg></ToolbarSlot>
        <ToolbarSlot><span className="font-['Roboto',sans-serif] text-[10px] font-bold text-[#333]">{"{≡}"}</span></ToolbarSlot>
        <ToolbarSlot>
          <div className="relative flex h-[16px] w-[16px] items-center justify-center rounded-full bg-[#12a594] text-[12px] font-bold leading-none text-white">
            a
            <div className="absolute -bottom-[9px] -right-[9px] flex h-[12px] w-[12px] items-center justify-center bg-[#f44] text-[9px] font-bold">2</div>
          </div>
        </ToolbarSlot>
        <ToolbarSlot><svg width="14" height="16" viewBox="0 0 14 16"><path fill="#2d6fb3" d="M0 0l14 8L0 16l3-8z" /></svg></ToolbarSlot>
        <ToolbarSlot><Puzzle size={16} fill="#5f6368" /></ToolbarSlot>
        <ToolbarSlot><PanelRight size={16} strokeWidth={2.2} /></ToolbarSlot>
        <ToolbarSlot><div className="relative h-[22px] w-[22px] overflow-hidden rounded-full bg-[#b8b6b2]"><div className="absolute left-[5px] top-[4px] h-[18px] w-[12px] rounded-full bg-[#2a1e1a]" /></div></ToolbarSlot>
        <ToolbarSlot><div className="flex h-[28px] w-[28px] items-center justify-center rounded-full bg-[#e3e4e6]"><EllipsisVertical size={16} strokeWidth={2.5} /></div></ToolbarSlot>
      </div>
    </div>
    <div className="flex h-[26px] shrink-0 items-center bg-[#1f2428] pl-[5px] font-['Roboto',sans-serif] text-[11px] text-white">
      <svg width="17" height="17" viewBox="0 0 20 20"><circle cx="10" cy="10" r="9" fill="none" stroke="#9a9da0" strokeWidth="1.500" /><text x="10" y="15" fontSize="14" fontWeight="700" fill="#9a9da0" textAnchor="middle" fontFamily="Liberation Serif">W</text></svg>
      <svg width="14" height="14" viewBox="0 0 14 14" className="ml-[12px]"><path fill="#9a9da0" d="M7 1a6.500 6.500 0 0 0-6 9h12a6.500 6.500 0 0 0-6-9z" /><path stroke="#1f2428" d="M7 10l2-5" /></svg>
      <span className="ml-[6px]">QAFOOD</span>
    </div>
  </>
);

const InfoLine = ({ label, value }: { label: string; value: string }) => (
  <div className="h-[24px] text-[14.500px] leading-[24px]">
    <span className="font-medium text-[#555]">{label} : </span>
    <span className="font-light text-[#666]">{value}</span>
  </div>
);

const navItems = [
  { label: "ALIMENTS", w: "w-[87px]" },
  { label: "HISTORIQUE DES COMMANDES", w: "w-[208px]" },
  { label: "CONNEXION", w: "w-[100px]" },
  { label: "INSCRIPTION", w: "w-[103px]" },
  { label: "DÉCONNEXION", w: "w-[112px]" },
];
const recent = ["Origine du sandwich", "Histoire du poulet Tikka", "Recette du Poulet Kerala", "Histoire du Milk-shake"];

const ShopPage = () => (
  <div className={`relative min-w-0 flex-1 overflow-hidden bg-white ${web}`}>
    <div className="flex h-[78px] items-center border-b border-[#eeeeee] pl-[392px]">
      <div className="w-[495px] shrink-0">
        <div className="text-[20px] font-semibold leading-[24px] text-black">QAFOOD</div>
        <div className="text-[11.500px] font-light leading-[18px] text-[#333]">Just another WordPress site</div>
      </div>
      <nav className="flex items-center text-[12px] text-[#666]">
        {navItems.map((n) => (
          <span key={n.label} className={`shrink-0 whitespace-nowrap ${n.w}`}>{n.label}</span>
        ))}
        <Search size={14} strokeWidth={2.5} color="#555" />
      </nav>
    </div>

    <div className="flex pl-[392px]">
      <main className="w-[792px] shrink-0">
        <div className="mt-[102px] flex justify-center">
          <div className="flex h-[46px] w-[46px] items-center justify-center rounded-full border border-[#86dcab]">
            <svg width="22" height="22" viewBox="0 0 22 22" fill="none"><path d="M2 12l6 6L20 3" stroke="#2cbf71" strokeWidth="1.700" /></svg>
          </div>
        </div>
        <h1 className="mt-[57px] text-center text-[30.500px] font-extralight leading-[40px] text-[#111]">Nous avons reçu votre commande</h1>
        <div className="mt-[49px] text-center text-[22px] font-medium leading-[28px] text-[#111]">Commande : #32494</div>
        <div className="mt-[27px] text-center text-[18.500px] font-light leading-[28px] text-[#999]">
          Une copie de votre reçu a été envoyé à <span className="text-[#111]">sergio.aldemia@gmail.com</span>
        </div>
        <div className="mt-[24px] flex">
          <div className="w-[408px] shrink-0">
            <h2 className="text-[28px] leading-[36px] text-[#111]">Détails de À emporter</h2>
            <div className="mt-[6px]">
              <InfoLine label="Nom" value="sergio rafenomanana" />
              <InfoLine label="Numéro de téléphone" value="0781148267" />
              <InfoLine label="Date de À emporter" value="23 décembre 2021" />
              <InfoLine label="À emporter Time" value="09:00" />
            </div>
          </div>
          <div>
            <h2 className="text-[28px] leading-[36px] text-[#111]">Détails de la commande</h2>
            <div className="mt-[6px]">
              <InfoLine label="Statut de la commande" value="En attente" />
              <InfoLine label="Date de la commande" value="23 décembre 2021" />
            </div>
            <h2 className="mt-[21px] text-[28px] leading-[36px] text-[#111]">Détails du paiement</h2>
            <div className="mt-[6px]">
              <InfoLine label="Moyen de paiement" value="Paiement de test" />
              <InfoLine label="Statut du paiement" value="En cours" />
            </div>
          </div>
        </div>
        <h2 className="mt-[21px] text-[25px] leading-[32px] text-[#111]">Récapitulatif de la commande</h2>
        <div className="mt-[20px] text-[14px]">
          <div className="grid h-[37px] grid-cols-3 items-center bg-[#fafafa] font-semibold text-[#555]">
            <span className="pl-[7px]">Article</span>
            <span className="text-center">Quantité</span>
            <span className="pr-[8px] text-right">Montant</span>
          </div>
          <div className="grid h-[67px] grid-cols-3 border-b border-[#e8e8e8] pt-[9px] font-light leading-[24px] text-[#666]">
            <span className="pl-[22px]">Feuilletés poulet bacon</span>
            <span className="text-center">1</span>
            <span className="pr-[24px] text-right">5.00€</span>
          </div>
          <div className="grid grid-cols-3 pt-[10px] font-light leading-[24px] text-[#666]">
            <div className="pl-[22px]">
              Pizza au poulet épicé
              <div className="mt-[4px] pl-[12px] text-[12px] leading-[16px]">Bacon (1.00€)</div>
            </div>
            <span className="text-center">1</span>
            <span className="pr-[24px] text-right">5.83€</span>
          </div>
        </div>
      </main>

      <aside className="ml-[71px] w-[257px] shrink-0">
        <div className="mt-[68px] flex h-[40px] items-center">
          <div className="flex h-full w-[187px] items-center bg-[#fafafa] pl-[12px] text-[14px] font-light text-[#777]">Rechercher ...</div>
          <Search size={15} strokeWidth={3.5} color="#111" className="ml-[44px] mt-[6px]" />
        </div>
        <div className="mt-[38px] h-[221px] border border-[#eeeeee]">
          <div className="flex h-[50px] items-center bg-[#f9f9f9] pl-[28px] text-[11.500px] text-[#222]">ARTICLES RÉCENTS</div>
          <div className="pl-[28px] pt-[18px] text-[16px] font-light leading-[32px] text-[#222]">
            {recent.map((r) => <div key={r}>{r}</div>)}
          </div>
        </div>
      </aside>
    </div>

    <div className="absolute left-[1855px] top-[899px] flex h-[24px] w-[24px] items-center justify-center rounded-full bg-[#e0251f]">
      <div className="border-x-[4px] border-b-[5px] border-x-transparent border-b-white" />
    </div>
  </div>
);

const RestorePopup = () => (
  <div className={`absolute left-[1599px] top-[67px] h-[130px] w-[320px] rounded-[6px] bg-white shadow-[0_1px_5px_rgba(0,0,0,0.45)] ${ui}`}>
    <X size={15} color="#555" strokeWidth={3} className="absolute right-[8px] top-[8px]" />
    <div className="pl-[16px] pt-[18px] text-[15px] leading-[20px] text-[#202124]">Restaurer les pages ?</div>
    <div className="pl-[16px] pt-[10px] text-[13px] leading-[18px] text-[#202124]">Chrome ne s'est pas correctement arrêté.</div>
    <div className="absolute right-[16px] top-[82px] flex h-[32px] w-[84px] items-center justify-center rounded-[4px] bg-[#1a73e8] text-[13px] font-medium text-white">Restaurer</div>
  </div>
);

const RightScreen = () => (
  <div className="relative flex h-[1080px] w-[1920px] shrink-0 flex-col bg-white">
    <ChromeBars />
    <div className="flex min-h-0 flex-1">
      <ShopPage />
      <div className="w-[17px] shrink-0 bg-[#f1f1f1]"><div className="ml-[2px] h-[338px] bg-[#bfbfbf]" /></div>
    </div>
    <div className={`flex h-[40px] shrink-0 items-center bg-[#1b2a30] text-[12px] text-[#f2f2f2] ${ui}`}>
      <Taskbar itemW="w-[49px]" iconSize={24} height="h-[40px]" />
      <div className="ml-auto flex items-center">
        <Cloud size={16} fill="#d8d8d8" color="#d8d8d8" />
        <span className="ml-[4px] w-[135px] whitespace-nowrap">-2°C  Ciel couvert</span>
        <ChevronUp size={12} />
        <span className="ml-[13px] text-[11px]">FRA</span>
        <div className="ml-[14px] flex w-[64px] flex-col items-center leading-[17px]">
          <span>01:17</span>
          <span>23/12/2021</span>
        </div>
        <MessageSquare size={17} className="ml-[38px] mr-[8px]" />
      </div>
    </div>
    <RestorePopup />
  </div>
);

export default function App() {
  return (
    <div className="flex h-[1080px] w-[3286px] overflow-hidden bg-black">
      <LeftScreen />
      <RightScreen />
    </div>
  );
}
